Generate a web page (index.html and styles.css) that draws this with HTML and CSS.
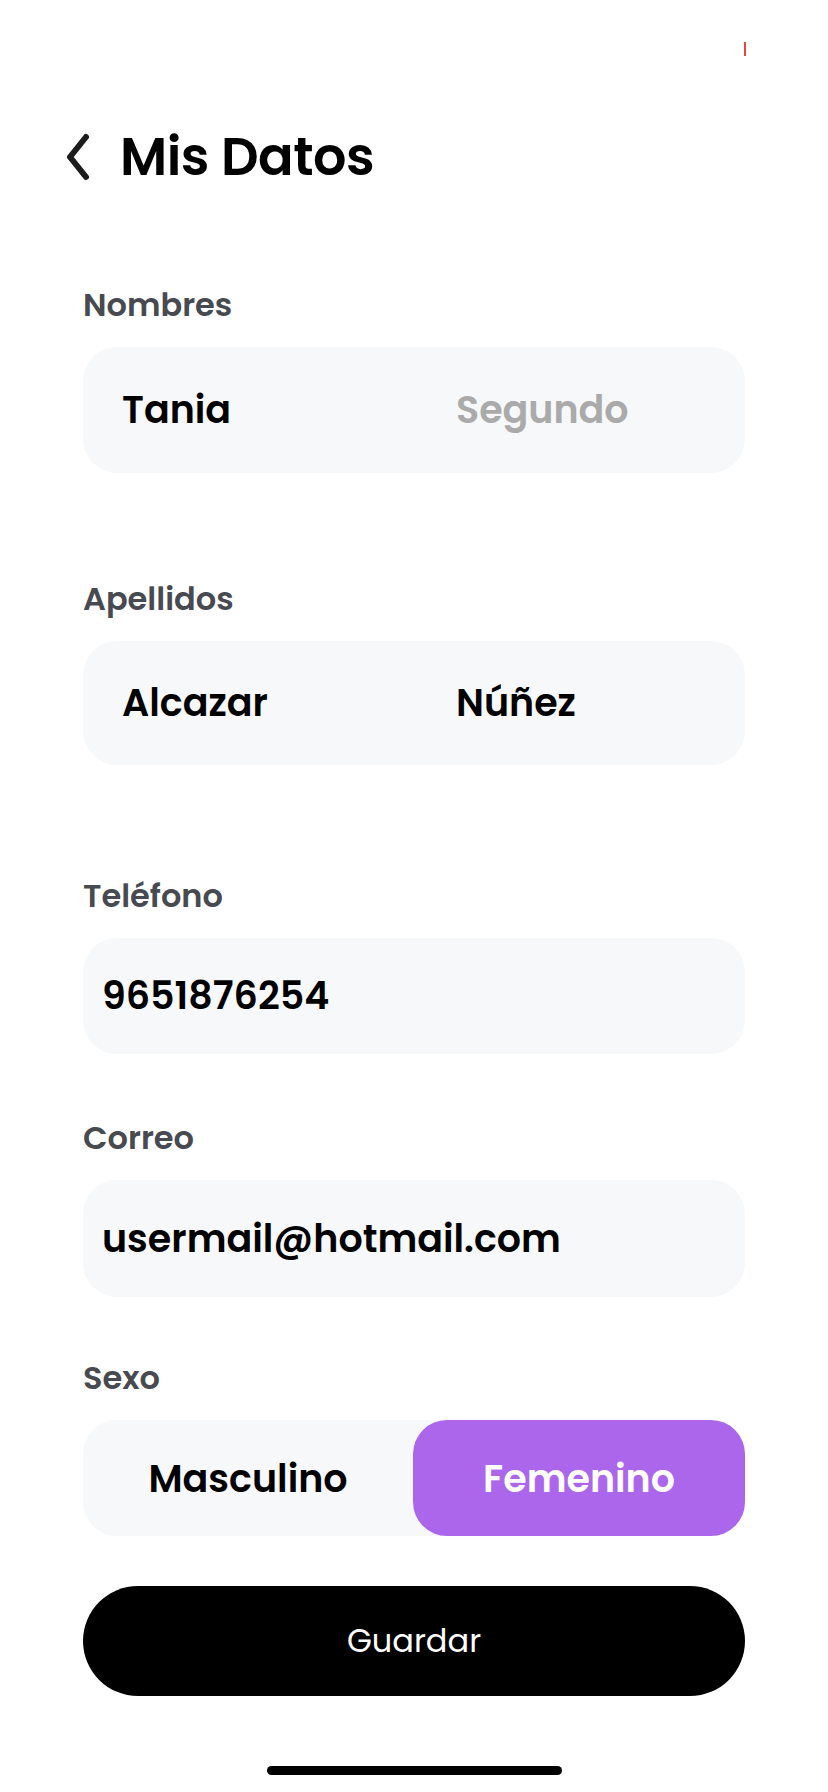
FILE: index.html
```html
<!DOCTYPE html>
<html lang="es">
<head>
<meta charset="utf-8">
<title>Mis Datos</title>
<link rel="stylesheet" href="styles.css">
</head>
<body>
<div class="screen">
  <div class="status"><span class="tick"></span></div>
  <header class="header">
    <svg class="back" width="30" height="48" viewBox="0 0 30 48"><path d="M23 4 L7 24 L23 44" fill="none" stroke="#1c1c1c" stroke-width="6" stroke-linecap="round" stroke-linejoin="round"/></svg>
    <h1 class="title">Mis Datos</h1>
  </header>
  <main class="form">
    <div class="field gap-1">
      <div class="label">Nombres</div>
      <div class="box split h126">
        <span class="val">Tania</span>
        <span class="val placeholder">Segundo</span>
      </div>
    </div>
    <div class="field gap-2">
      <div class="label">Apellidos</div>
      <div class="box split h124">
        <span class="val">Alcazar</span>
        <span class="val">Núñez</span>
      </div>
    </div>
    <div class="field gap-3">
      <div class="label">Teléfono</div>
      <div class="box single h116"><span class="val">9651876254</span></div>
    </div>
    <div class="field gap-4">
      <div class="label">Correo</div>
      <div class="box single h117"><span class="val">usermail@hotmail.com</span></div>
    </div>
    <div class="field gap-5">
      <div class="label">Sexo</div>
      <div class="box toggle h116">
        <span class="opt">Masculino</span>
        <span class="opt active">Femenino</span>
      </div>
    </div>
    <button class="save">Guardar</button>
  </main>
  <div class="home"><span class="bar"></span></div>
</div>
</body>
</html>
```
FILE: styles.css
```css
* { box-sizing: border-box; }
html, body { margin: 0; padding: 0; background: #fff; }
body { font-family: "Poppins", "Inter", "Noto Sans", sans-serif; color: #000; }
.screen { width: 828px; height: 1792px; display: flex; flex-direction: column; }
.status { height: 125px; display: flex; justify-content: flex-end; padding: 42px 82px 0 0; }
.tick { width: 2px; height: 14px; background: #e8453c; }
.header { display: flex; align-items: center; height: 64px; padding-left: 63px; gap: 27px; }
.back { display: block; }
.title { margin: 0; font-size: 52.5px; font-weight: 600; line-height: 64px; letter-spacing: -0.5px; }
.form { padding: 96px 83px 0; display: flex; flex-direction: column; }
.field { display: flex; flex-direction: column; }
.gap-1 { margin-bottom: 106px; }
.gap-2 { margin-bottom: 111px; }
.gap-3 { margin-bottom: 64px; }
.gap-4 { margin-bottom: 61px; }
.gap-5 { margin-bottom: 50px; }
.label { font-size: 32px; font-weight: 600; line-height: 40px; color: #474a50; margin-bottom: 22px; }
.box { background: #f7f8fa; border-radius: 34px; display: flex; align-items: center; }
.h126 { height: 126px; }
.h124 { height: 124px; }
.h116 { height: 116px; }
.h117 { height: 117px; }
.split { display: grid; grid-template-columns: 1fr 1fr; }
.split .val { padding-left: 39px; }
.split .val + .val { padding-left: 42px; }
.single { padding-left: 19px; }
.val { font-size: 38px; font-weight: 600; line-height: 46px; }
.placeholder { color: #aaaaaa; }
.toggle { display: grid; grid-template-columns: 330px 1fr; align-items: stretch; }
.opt { display: flex; align-items: center; justify-content: center; font-size: 38px; font-weight: 600; border-radius: 34px; }
.opt.active { background: #ab66ec; color: #fff; }
.save { height: 110px; border: 0; border-radius: 55px; background: #000; color: #fff; font-family: inherit; font-size: 32px; font-weight: 400; padding: 0; }
.home { margin-top: auto; padding-bottom: 17px; display: flex; justify-content: center; }
.bar { width: 295px; height: 9px; border-radius: 5px; background: #000; }
```
